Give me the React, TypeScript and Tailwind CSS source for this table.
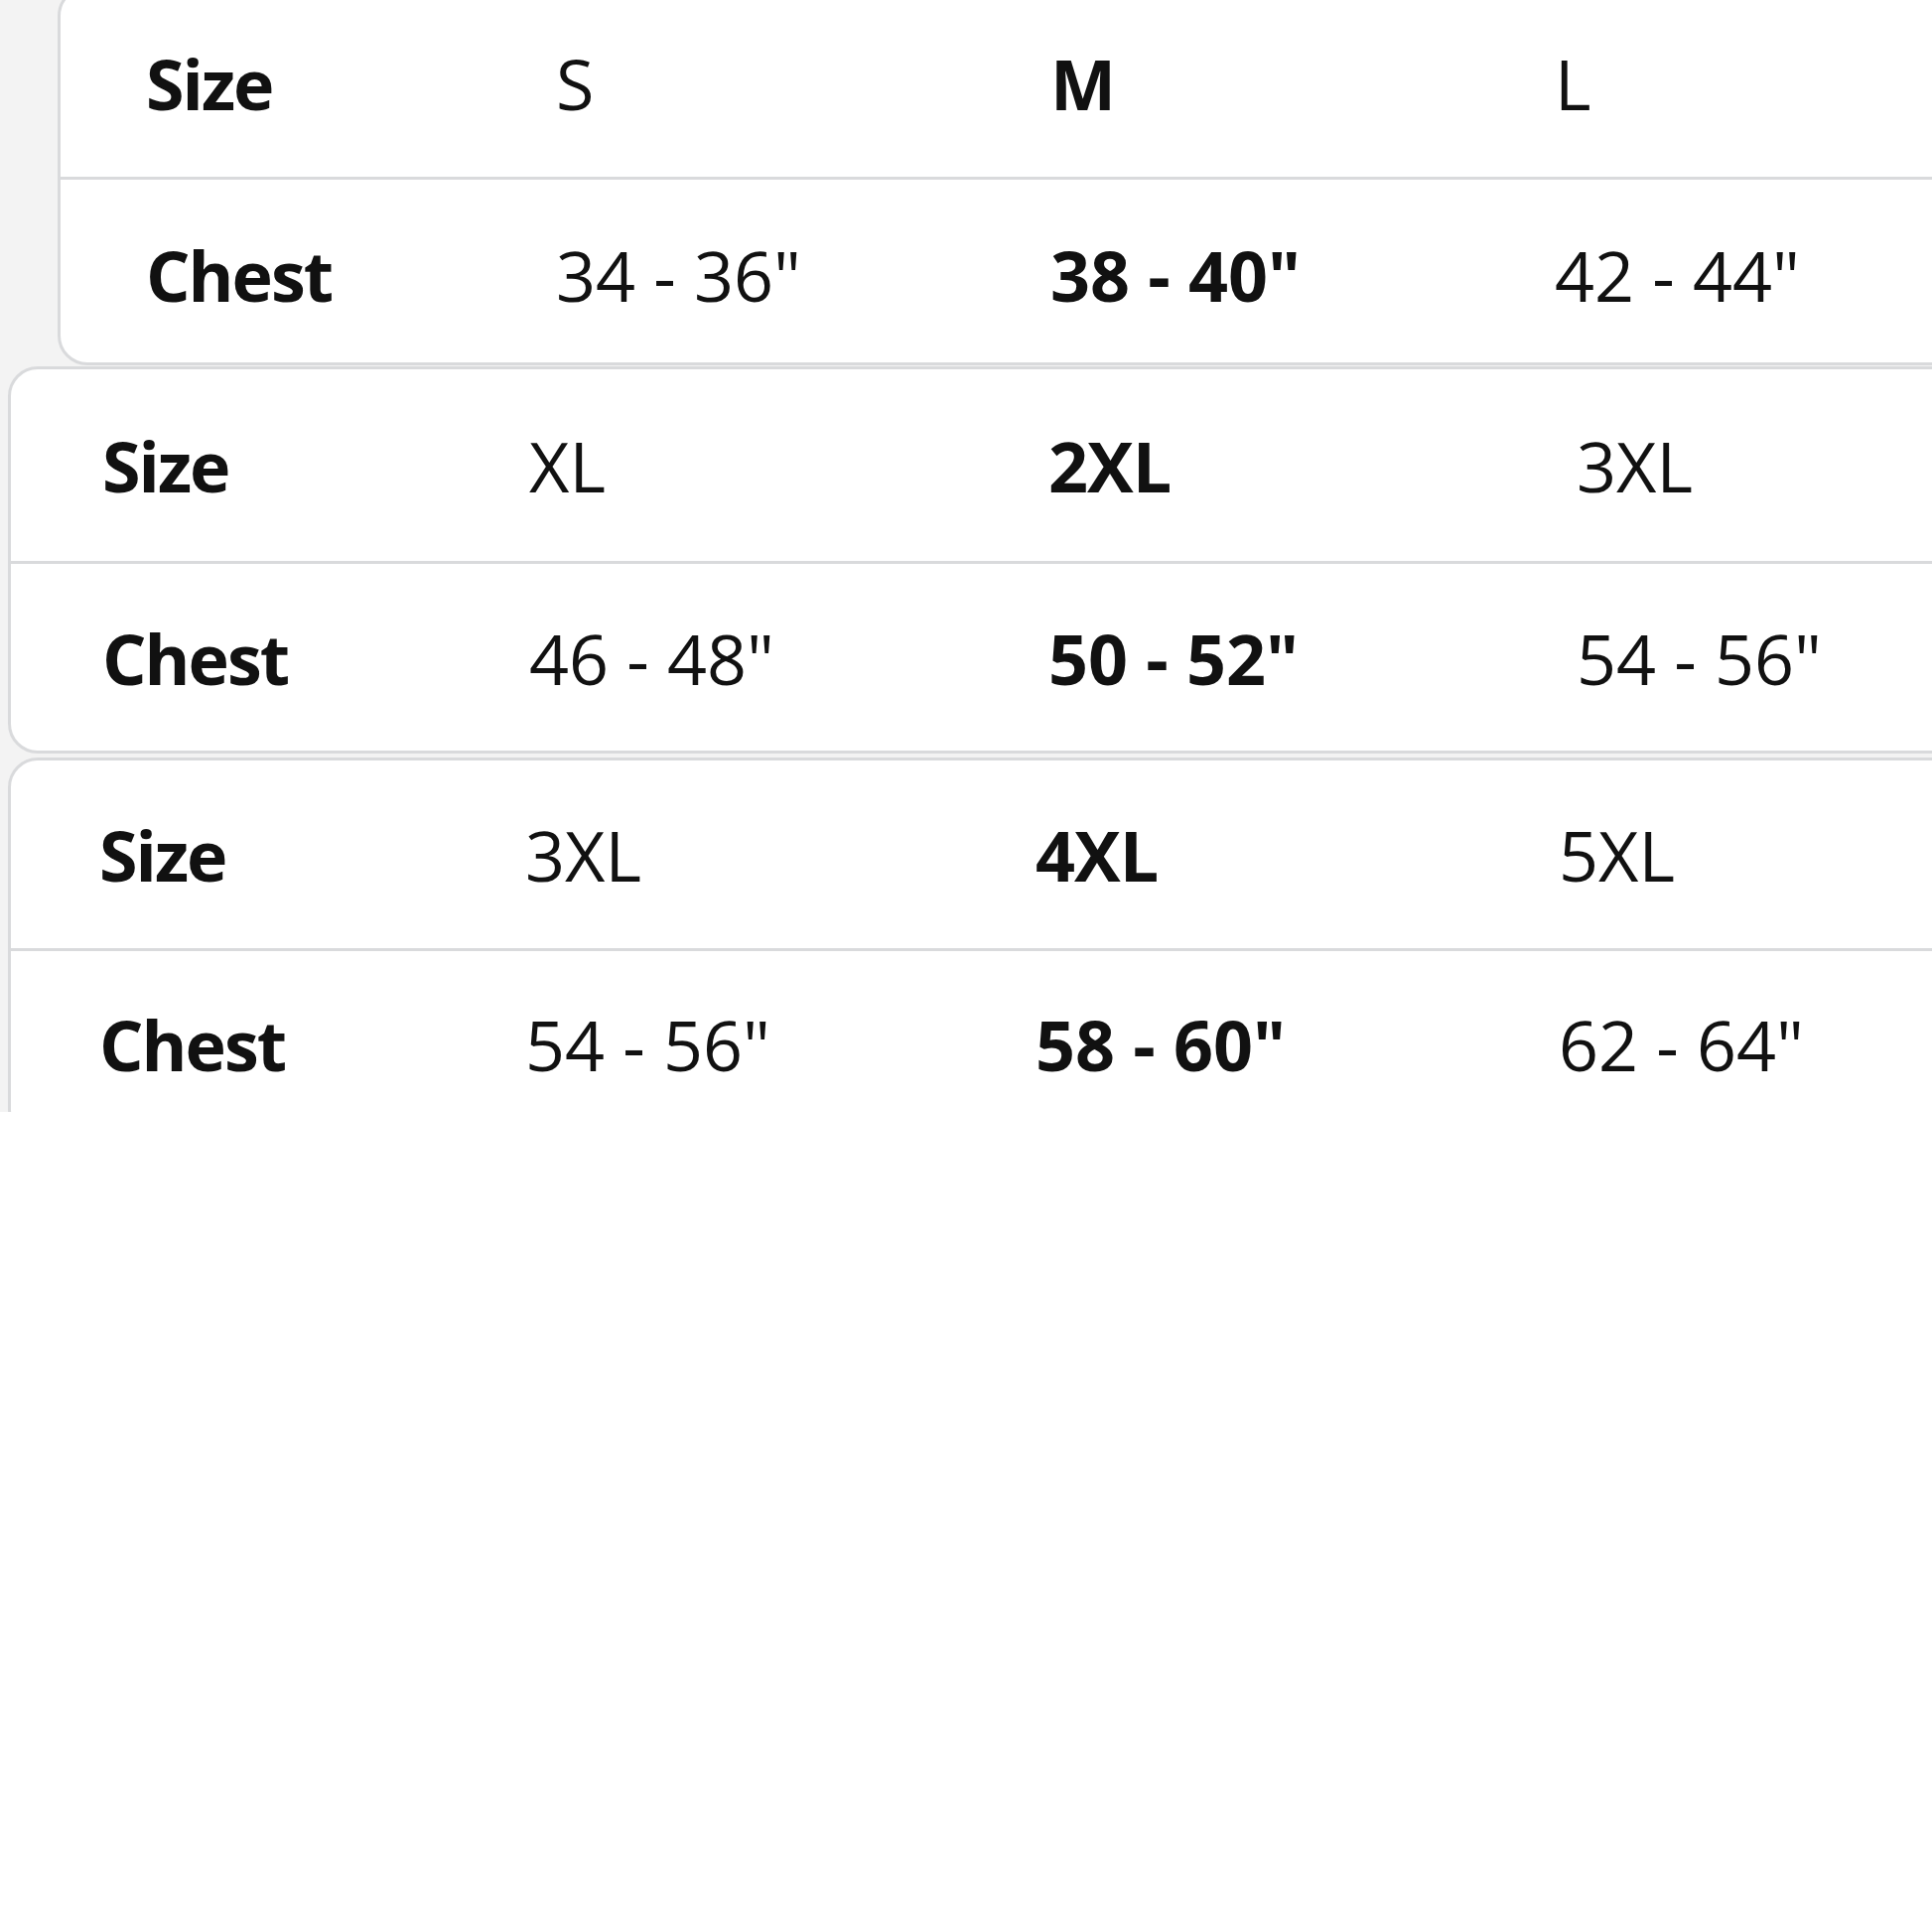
import React from "react";

type Card = {
  ml: string;
  mt: string;
  cols: string;
  pl: string;
  row1: string;
  row2: string;
  pt2: string;
  sizes: string[];
  chest: string[];
};

const cards: Card[] = [
  {
    ml: "ml-[58px]",
    mt: "mt-[-14px]",
    cols: "grid-cols-[413px_498px_508px_1fr]",
    pl: "pl-[86px]",
    row1: "h-[189px]",
    row2: "h-[184px]",
    pt2: "pt-[8px]",
    sizes: ["S", "M", "L"],
    chest: ['34 - 36"', '38 - 40"', '42 - 44"'],
  },
  {
    ml: "ml-[8px]",
    mt: "mt-[1px]",
    cols: "grid-cols-[430px_523px_532px_1fr]",
    pl: "pl-[92px]",
    row1: "h-[193px]",
    row2: "h-[188px]",
    pt2: "pt-[2px]",
    sizes: ["XL", "2XL", "3XL"],
    chest: ['46 - 48"', '50 - 52"', '54 - 56"'],
  },
  {
    ml: "ml-[8px]",
    mt: "mt-[4px]",
    cols: "grid-cols-[429px_514px_527px_1fr]",
    pl: "pl-[89px]",
    row1: "h-[189px]",
    row2: "h-[186px]",
    pt2: "pt-[2px]",
    sizes: ["3XL", "4XL", "5XL"],
    chest: ['54 - 56"', '58 - 60"', '62 - 64"'],
  },
];

function Row({
  card,
  label,
  values,
  h,
  pt,
  midTrack,
}: {
  card: Card;
  label: string;
  values: string[];
  h: string;
  pt: string;
  midTrack: string;
}) {
  return (
    <div className={`grid ${card.cols} ${card.pl} ${h} ${pt} items-center`}>
      <div className="font-bold tracking-[-2px]">{label}</div>
      <div className="font-normal tracking-[0px]">{values[0]}</div>
      <div className={`font-bold ${midTrack}`}>{values[1]}</div>
      <div className="font-normal tracking-[0px]">{values[2]}</div>
    </div>
  );
}

export default function App() {
  return (
    <div className="w-[1946px] h-[1946px] bg-white overflow-hidden">
      <div
        className="h-[1120px] bg-[#f3f3f3] overflow-hidden text-[#111111] text-[70px] leading-none"
        style={{ fontFamily: '"Open Sans", "Noto Sans", sans-serif' }}
      >
        {cards.map((card, i) => (
          <div
            key={i}
            className={`${card.ml} ${card.mt} w-[2100px] bg-white border-[3px] border-[#d9dadc] rounded-[30px]`}
          >
            <Row card={card} label="Size" values={card.sizes} h={card.row1} pt="pt-0" midTrack="tracking-[-1px]" />
            <div className="h-[3px] bg-[#d9dadc]" />
            <Row card={card} label="Chest" values={card.chest} h={card.row2} pt={card.pt2} midTrack="tracking-[0px]" />
          </div>
        ))}
      </div>
    </div>
  );
}
